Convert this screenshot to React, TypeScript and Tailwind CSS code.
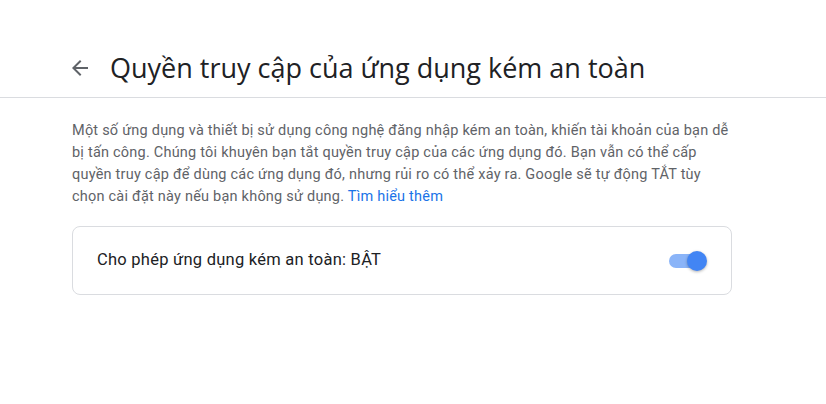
import React from 'react'

const ArrowBack: React.FC = () => (
  <svg viewBox="0 0 24 24" className="w-6 h-6 fill-[#5f6368]">
    <path d="M20 11H7.83l5.59-5.59L12 4l-8 8 8 8 1.41-1.41L7.83 13H20v-2z" />
  </svg>
)

export default function App() {
  return (
    <div className="min-h-screen w-full bg-white font-['Roboto','Liberation_Sans',sans-serif]">
      <header className="border-b border-[#dadce0] pt-[50px] pb-[11px]">
        <div className="flex items-center gap-[18px] pl-[68px]">
          <ArrowBack />
          <h1 className="text-[27px] leading-9 font-normal text-[#202124] font-['Open_Sans','Roboto',sans-serif]">
            Quyền truy cập của ứng dụng kém an toàn
          </h1>
        </div>
      </header>

      <main className="ml-[72px] w-[662px] pt-[22px]">
        <p className="text-[14.5px] leading-[22px] tracking-[0.22px] text-[#5f6368]">
          Một số ứng dụng và thiết bị sử dụng công nghệ đăng nhập kém an toàn, khiến tài khoản của bạn dễ
          bị tấn công. Chúng tôi khuyên bạn tắt quyền truy cập của các ứng dụng đó. Bạn vẫn có thể cấp
          quyền truy cập để dùng các ứng dụng đó, nhưng rủi ro có thể xảy ra. Google sẽ tự động TẮT tùy
          chọn cài đặt này nếu bạn không sử dụng.{' '}
          <a className="text-[#1a73e8]">Tìm hiểu thêm</a>
        </p>

        <div className="mt-[18px] flex h-[69px] w-[660px] items-center justify-between rounded-lg border border-[#dadce0] px-6">
          <span className="text-[16.5px] tracking-[0.25px] text-[#202124]">Cho phép ứng dụng kém an toàn: BẬT</span>
          <div className="relative h-5 w-[38px]">
            <div className="absolute left-0 top-[3px] h-[14px] w-[34px] rounded-full bg-[#8ab4f8]" />
            <div className="absolute right-0 top-0 h-5 w-5 rounded-full bg-[#4285f4] shadow-[0_1px_3px_rgba(0,0,0,0.3)]" />
          </div>
        </div>
      </main>
    </div>
  )
}
